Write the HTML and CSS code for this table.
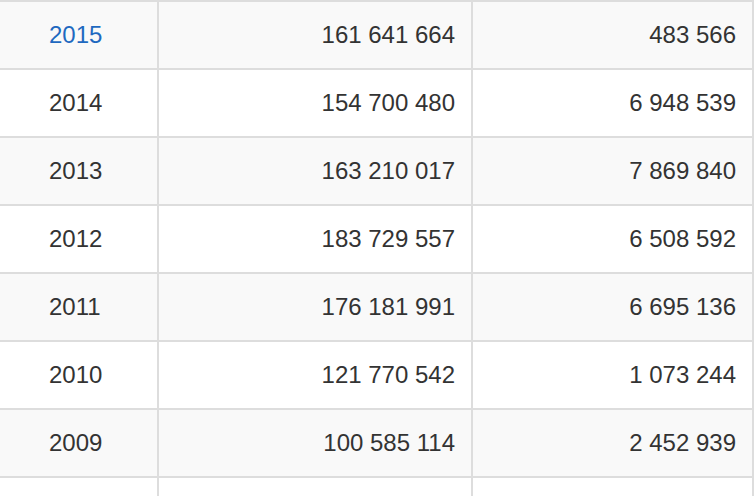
FILE: index.html
```html
<!DOCTYPE html>
<html>
<head>
<meta charset="utf-8">
<link rel="stylesheet" href="styles.css">
</head>
<body>
<div class="table">
  <div class="row odd"><div class="cell year"><a class="link" href="#">2015</a></div><div class="cell num">161 641 664</div><div class="cell num last">483 566</div></div>
  <div class="row"><div class="cell year">2014</div><div class="cell num">154 700 480</div><div class="cell num last">6 948 539</div></div>
  <div class="row odd"><div class="cell year">2013</div><div class="cell num">163 210 017</div><div class="cell num last">7 869 840</div></div>
  <div class="row"><div class="cell year">2012</div><div class="cell num">183 729 557</div><div class="cell num last">6 508 592</div></div>
  <div class="row odd"><div class="cell year">2011</div><div class="cell num">176 181 991</div><div class="cell num last">6 695 136</div></div>
  <div class="row"><div class="cell year">2010</div><div class="cell num">121 770 542</div><div class="cell num last">1 073 244</div></div>
  <div class="row odd"><div class="cell year">2009</div><div class="cell num">100 585 114</div><div class="cell num last">2 452 939</div></div>
  <div class="row"><div class="cell year"></div><div class="cell num"></div><div class="cell num last"></div></div>
</div>
</body>
</html>
```
FILE: styles.css
```css
html, body {
  margin: 0;
  padding: 0;
  background: #fff;
}
body {
  font-family: "Liberation Sans", Arial, sans-serif;
  font-size: 24px;
  color: #333;
  overflow: hidden;
}
.table {
  width: 754px;
}
.row {
  display: grid;
  grid-template-columns: 157px 314px 283px;
  height: 68px;
  box-sizing: border-box;
  border-top: 2px solid #ddd;
  background: #fff;
}
.row.odd {
  background: #f9f9f9;
}
.cell {
  display: flex;
  align-items: center;
  box-sizing: border-box;
  padding: 0 16px;
}
.year {
  padding-left: 49px;
}
.num {
  justify-content: flex-end;
  border-left: 2px solid #ddd;
}
.num.last {
  border-right: 2px solid #ddd;
}
.link {
  color: #1f69c0;
  text-decoration: none;
}
```
